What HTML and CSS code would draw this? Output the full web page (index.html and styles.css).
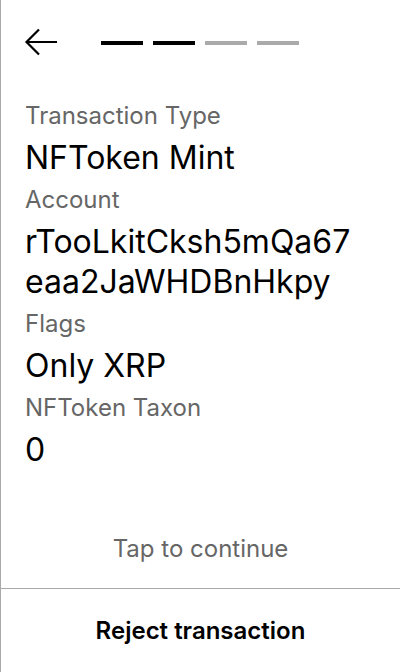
FILE: index.html
```html
<!DOCTYPE html>
<html>
<head>
<meta charset="utf-8">
<link rel="stylesheet" href="styles.css">
</head>
<body>
<div class="page">
  <header class="header">
    <svg class="back" width="34" height="30" viewBox="0 0 34 30">
      <path d="M33 14H3M15 1.5L2.5 14L15 26.5" fill="none" stroke="#000" stroke-width="2.2"/>
    </svg>
    <div class="steps">
      <span class="step done"></span>
      <span class="step done"></span>
      <span class="step"></span>
      <span class="step"></span>
    </div>
  </header>
  <main class="content">
    <div class="field">
      <div class="label">Transaction Type</div>
      <div class="value">NFToken Mint</div>
    </div>
    <div class="field">
      <div class="label">Account</div>
      <div class="value">rTooLkitCksh5mQa67<br>eaa2JaWHDBnHkpy</div>
    </div>
    <div class="field">
      <div class="label">Flags</div>
      <div class="value">Only XRP</div>
    </div>
    <div class="field">
      <div class="label">NFToken Taxon</div>
      <div class="value">0</div>
    </div>
  </main>
  <div class="tap">Tap to continue</div>
  <footer class="footer">Reject transaction</footer>
</div>
</body>
</html>
```

FILE: styles.css
```css
html, body {
  margin: 0;
  padding: 0;
  background: #fff;
}
body {
  font-family: Inter, "Noto Sans", sans-serif;
  color: #000;
}
.page {
  height: 672px;
  box-sizing: border-box;
  border-left: 1px solid #aaa;
  display: flex;
  flex-direction: column;
}
.header {
  display: flex;
  align-items: center;
  padding: 28px 0 0 23px;
  height: 30px;
  gap: 43px;
}
.back {
  display: block;
}
.steps {
  display: flex;
  gap: 10px;
  margin-top: -1px;
}
.step {
  display: block;
  width: 42px;
  height: 4px;
  background: #aaa;
}
.step.done {
  background: #000;
}
.content {
  flex: 1;
  padding: 44px 24px 0 24px;
  display: flex;
  flex-direction: column;
  gap: 8px;
}
.label {
  font-size: 24px;
  line-height: 28px;
  color: #666;
  margin-bottom: 8px;
}
.value {
  font-size: 32px;
  line-height: 40px;
  color: #000;
}
.tap {
  text-align: center;
  font-size: 24px;
  line-height: 28px;
  color: #666;
  padding-bottom: 25px;
}
.footer {
  border-top: 1px solid #aaa;
  height: 83px;
  display: flex;
  align-items: center;
  justify-content: center;
  font-size: 24px;
  font-weight: 600;
}
```
